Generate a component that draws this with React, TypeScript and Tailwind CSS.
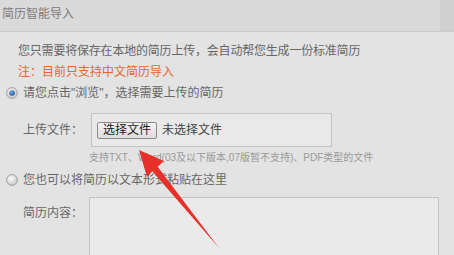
import React from "react";

const font = "font-['Liberation_Sans','Noto_Sans_CJK_SC',sans-serif]";

function Radio({ checked }: { checked?: boolean }) {
  return (
    <svg width="12" height="12" viewBox="0 0 12 12" className="shrink-0">
      <defs>
        <radialGradient id={checked ? "rg1" : "rg2"} cx="40%" cy="35%" r="70%">
          <stop offset="0%" stopColor="#fafafa" />
          <stop offset="100%" stopColor="#c4c4c4" />
        </radialGradient>
        <radialGradient id="dot" cx="40%" cy="35%" r="70%">
          <stop offset="0%" stopColor="#6fb0ec" />
          <stop offset="100%" stopColor="#1d4f8a" />
        </radialGradient>
      </defs>
      <circle cx="6" cy="6" r="5.4" fill={`url(#${checked ? "rg1" : "rg2"})`} stroke="#9a9a9a" strokeWidth="0.9" />
      {checked && <circle cx="6" cy="6" r="2.8" fill="url(#dot)" />}
    </svg>
  );
}

export default function App() {
  return (
    <div className={`relative w-[454px] h-[255px] overflow-hidden bg-[#e3e3e3] text-[12px] ${font}`}>
      {/* header */}
      <div className="flex h-[32px] border-b border-[#cbcbcb] bg-[#dadada]">
        <div className="flex-1 pl-[2px] pt-[6px] text-[12px] leading-[16px] text-[#7a7a7a]">简历智能导入</div>
        <div className="w-[14px] bg-[#d0d0d0]" />
      </div>

      <div className="flex flex-col pt-[9px]">
        <div className="h-[21px] pl-[18px] leading-[21px] tracking-[-0.2px] text-[#666]">
          您只需要将保存在本地的简历上传，会自动帮您生成一份标准简历
        </div>
        <div className="h-[21px] pl-[18px] leading-[21px] text-[#e6672c]">注：目前只支持中文简历导入</div>
        <div className="flex h-[20px] items-center gap-[5px] pl-[6px] text-[#666]">
          <Radio checked />
          <span className="leading-[20px]">请您点击"浏览"，选择需要上传的简历</span>
        </div>

        <div className="mt-[10px] flex items-center pl-[23px]">
          <span className="w-[68px] text-[#666]">上传文件：</span>
          <div className="flex h-[34px] w-[241px] items-center border border-[#c2c2c2] bg-[#e9e9e9] pl-[5px]">
            <button className="h-[17px] rounded-[2px] border border-[#8a8a8a] bg-gradient-to-b from-[#f4f4f4] to-[#dcdcdc] px-[5px] text-[12px] leading-[15px] text-[#222]">
              选择文件
            </button>
            <span className="ml-[5px] text-[#444]">未选择文件</span>
          </div>
        </div>

        <div className="h-[21px] pl-[89px] text-[10px] leading-[21px] text-[#999]">
          支持TXT、Word(03及以下版本,07版暂不支持)、PDF类型的文件
        </div>

        <div className="flex h-[24px] items-center gap-[5px] pl-[6px] text-[#666]">
          <Radio />
          <span>您也可以将简历以文本形式粘贴在这里</span>
        </div>

        <div className="mt-[5px] flex pl-[23px]">
          <span className="w-[66px] pt-[8px] leading-[16px] text-[#666]">简历内容：</span>
          <div className="h-[80px] w-[350px] border border-[#c2c2c2] bg-[#eaeaea]" />
        </div>
      </div>

      {/* red annotation arrow */}
      <svg className="pointer-events-none absolute left-0 top-0" width="454" height="255" viewBox="0 0 454 255">
        <polygon
          points="139,150 164,161 157.7,166.8 219,248 152.3,171.2 147,177"
          fill="#e8302b"
        />
      </svg>
    </div>
  );
}
